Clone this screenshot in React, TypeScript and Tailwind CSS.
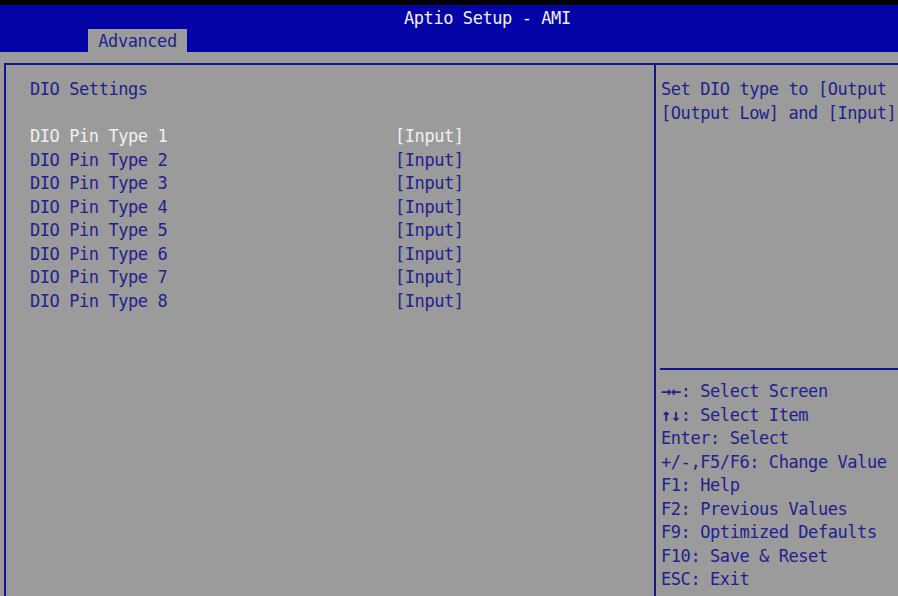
import React from "react";

const rows = [1, 2, 3, 4, 5, 6, 7, 8];
const keys: [string, string][] = [
  ["→←", ": Select Screen"],
  ["↑↓", ": Select Item"],
  ["", "Enter: Select"],
  ["", "+/-,F5/F6: Change Value"],
  ["", "F1: Help"],
  ["", "F2: Previous Values"],
  ["", "F9: Optimized Defaults"],
  ["", "F10: Save & Reset"],
  ["", "ESC: Exit"],
];

export default function App() {
  return (
    <div
      className="w-[898px] h-[596px] overflow-hidden bg-[#9b9b9b] flex flex-col text-[17px] tracking-[-0.43px] leading-[23.5px] text-[#22228c]"
      style={{ fontFamily: '"DejaVu Sans Mono", monospace' }}
    >
      <div className="h-[5px] bg-black shrink-0" />
      <div className="h-[47px] bg-[#0303a6] shrink-0 flex flex-col pt-[2px]">
        <div className="h-[22px] pl-[404px] text-[#f2f2f2] whitespace-nowrap leading-[22px]">
          Aptio Setup - AMI
        </div>
        <div className="h-[23px] flex">
          <div className="ml-[88px] w-[99px] bg-[#9b9b9b] flex items-center justify-center leading-[23px] text-[#22228c] pt-[1px]">
            Advanced
          </div>
        </div>
      </div>
      <div className="h-[11px] shrink-0" />
      <div className="flex-1 ml-[4px] border-l-2 border-t-2 border-[#14148e] flex min-h-0">
        <div className="w-[648px] shrink-0 pt-[13px] pl-[24px]">
          <div className="h-[23.5px] whitespace-nowrap">DIO Settings</div>
          <div className="h-[23.5px]" />
          {rows.map((n) => (
            <div
              key={n}
              className={`h-[23.5px] flex whitespace-nowrap ${n === 1 ? "text-[#f0f0f0]" : "text-[#22228c]"}`}
            >
              <span className="w-[367px] shrink-0">DIO Pin Type {n}</span>
              <span className="-ml-[2px]">[Input]</span>
            </div>
          ))}
        </div>
        <div className="w-[2px] bg-[#14148e] shrink-0" />
        <div className="flex-1 flex flex-col min-w-0">
          <div className="h-[303px] shrink-0 pt-[13px] pl-[5px] overflow-hidden whitespace-nowrap">
            <div className="h-[23.5px]">Set DIO type to [Output</div>
            <div className="h-[23.5px]">[Output Low] and [Input]</div>
          </div>
          <div className="h-[2px] ml-[4px] bg-[#14148e] shrink-0" />
          <div className="pt-[10px] pl-[5px] whitespace-nowrap">
            {keys.map(([a, k]) => (
              <div key={k} className="h-[23.5px]">
                {a && <span className="font-bold">{a}</span>}
                {k}
              </div>
            ))}
          </div>
        </div>
      </div>
    </div>
  );
}
